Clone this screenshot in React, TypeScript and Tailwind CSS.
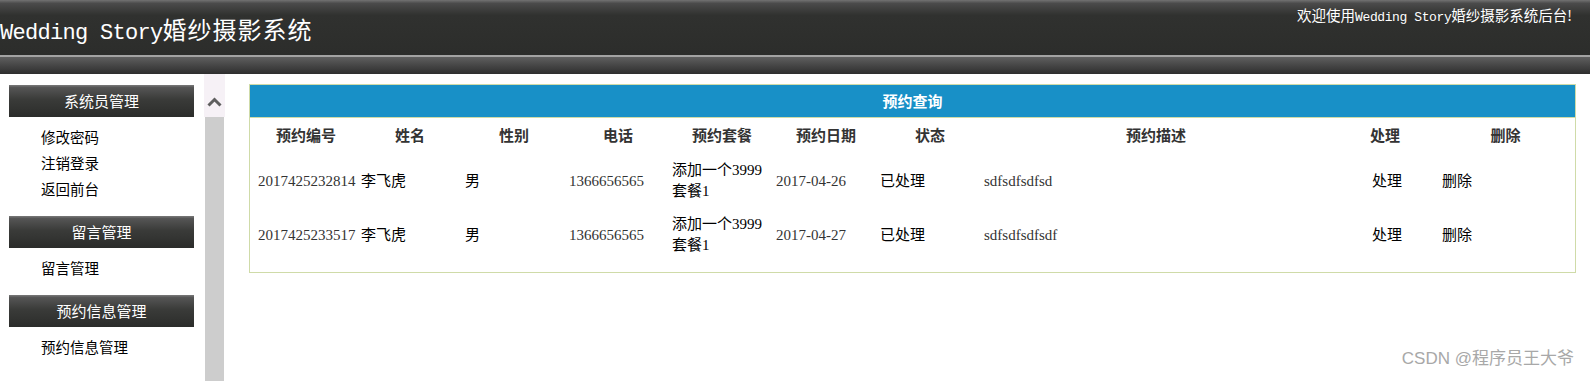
const menu = [
  { title: "系统员管理", items: ["修改密码", "注销登录", "返回前台"] },
  { title: "留言管理", items: ["留言管理"] },
  { title: "预约信息管理", items: ["预约信息管理"] },
];

const heads = ["预约编号", "姓名", "性别", "电话", "预约套餐", "预约日期", "状态", "预约描述", "处理", "删除"];

const rows = [
  { id: "2017425232814", name: "李飞虎", sex: "男", tel: "1366656565", date: "2017-04-26", state: "已处理", desc: "sdfsdfsdfsd" },
  { id: "2017425233517", name: "李飞虎", sex: "男", tel: "1366656565", date: "2017-04-27", state: "已处理", desc: "sdfsdfsdfsdf" },
];

const cols = "grid grid-cols-[104px_104px_104px_104px_104px_104px_104px_348px_110px_1fr]";
const cjk = "font-['Liberation_Serif','Noto_Sans_CJK_SC',serif]";

const App = () => {
  return (
    <div className="relative h-screen flex flex-col overflow-hidden bg-white font-['Noto_Sans_CJK_SC',sans-serif]">
      {/* top banner */}
      <header>
        <div className="h-[55px] flex justify-between bg-[linear-gradient(to_bottom,#727272_0%,#4b4b4b_6%,#30312f_28%,#2c2d2b_100%)] text-white">
          <div className="self-end pb-[6px] leading-[30px] whitespace-nowrap">
            <span className="font-['Liberation_Mono',monospace] text-[22px] tracking-[-0.7px]">Wedding Story</span>
            <span className="text-[24px] tracking-[1px]">婚纱摄影系统</span>
          </div>
          <div className="self-start pt-[6px] pr-[18px] leading-[18px] text-[14.5px] whitespace-nowrap">
            欢迎使用
            <span className="font-['Liberation_Mono',monospace] text-[13px] tracking-[-0.4px]">Wedding Story</span>
            婚纱摄影系统后台!
          </div>
        </div>
        <div className="h-[2px] bg-[#a3a3a3]" />
        <div className="h-[17px] bg-[linear-gradient(to_bottom,#5f5f5f_0%,#484848_45%,#2e2e2e_100%)]" />
      </header>

      <div className="flex flex-1">
        {/* left menu */}
        <aside className="w-[204px] pl-[9px] pr-[10px] pt-[11px]">
          {menu.map((m) => (
            <div key={m.title}>
              <div className="h-[32px] flex items-center justify-center text-white text-[15px] bg-[linear-gradient(to_bottom,#7a7a7a_0%,#555_8%,#3a3b39_45%,#2b2c2a_100%)]">
                {m.title}
              </div>
              <ul className="pt-[7px] pb-[14px] pl-[32px] text-[14.5px] leading-[26px] text-black">
                {m.items.map((it) => (
                  <li key={it}>{it}</li>
                ))}
              </ul>
            </div>
          ))}
        </aside>

        {/* frame scrollbar */}
        <div className="w-[21px] flex flex-col">
          <div className="h-[43px] bg-[#f6f1f6] flex items-end justify-center pb-[10px]">
            <svg width="15" height="10" viewBox="0 0 15 10">
              <polyline points="1.5,8.5 7.5,2.5 13.5,8.5" fill="none" stroke="#5f5f5f" strokeWidth="3" />
            </svg>
          </div>
          <div className="flex-1 mx-px bg-[#cdcdcd]" />
        </div>

        {/* content */}
        <main className="flex-1 pl-[24px] pr-[14px] pt-[10px]">
          <div className="border border-[#cfdba8] pb-[10px]">
            <div className="h-[33px] flex items-center justify-center bg-[#1890c7] border-b border-[#cfdba8] text-white font-bold text-[15px]">
              预约查询
            </div>
            <div className={`px-[4px] text-[15px] text-[#333] ${cjk}`}>
              <div className={`${cols} h-[36px] items-center font-bold`}>
                {heads.map((h) => (
                  <div key={h} className="text-center">{h}</div>
                ))}
              </div>
              {rows.map((r) => (
                <div key={r.id} className={`${cols} h-[54px] items-center leading-[21px]`}>
                  <div className="px-[4px]">{r.id}</div>
                  <div className="px-[3px] text-black">{r.name}</div>
                  <div className="px-[3px] text-black">{r.sex}</div>
                  <div className="px-[3px]">{r.tel}</div>
                  <div className="px-[2px] text-black">
                    添加一个3999
                    <br />
                    套餐1
                  </div>
                  <div className="px-[2px]">{r.date}</div>
                  <div className="px-[2px] text-black">{r.state}</div>
                  <div className="px-[2px]">{r.desc}</div>
                  <div className="text-center pl-[4px] text-black">处理</div>
                  <div className="px-[2px] text-black">删除</div>
                </div>
              ))}
            </div>
          </div>
        </main>
      </div>

      <div className="absolute right-[16px] bottom-[11px] text-[17px] leading-[22px] text-[#a8a8a8] font-['Liberation_Sans','Noto_Sans_CJK_SC',sans-serif] [text-shadow:0_0_2px_#fff]">
        CSDN @程序员王大爷
      </div>
    </div>
  );
};

export default App;
